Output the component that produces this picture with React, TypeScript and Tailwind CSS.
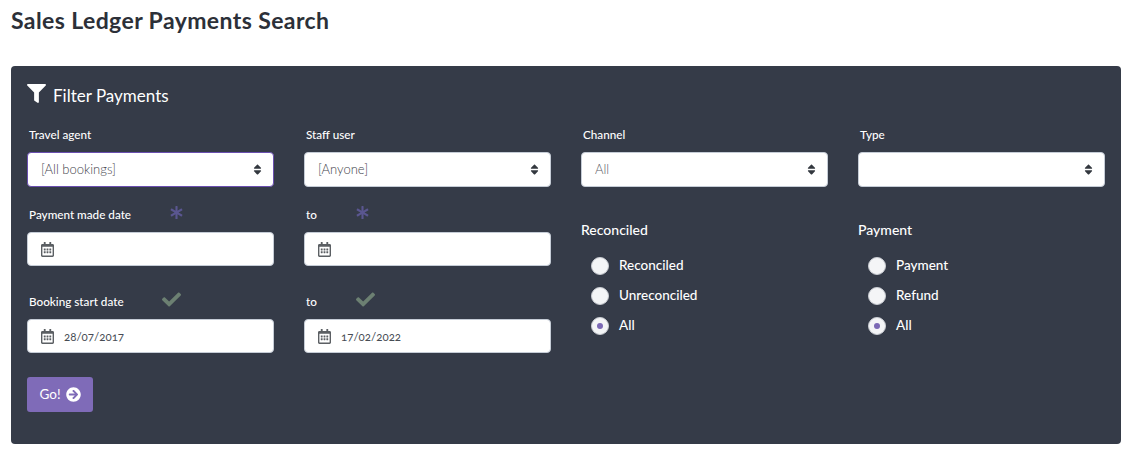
import React from "react";
import { FaFilter, FaSort, FaRegCalendarAlt, FaAsterisk, FaCheck, FaArrowCircleRight } from "react-icons/fa";

const font = "font-['Lato','Open_Sans',sans-serif]";

function Label({ children, mark }: { children: React.ReactNode; mark?: React.ReactNode }) {
  return (
    <div className="h-[17px] pl-[2px] flex items-center relative text-[11.7px] leading-[17px] font-medium text-white mb-[9px]">
      <span>{children}</span>
      {mark}
    </div>
  );
}

function SelectBox({ value, focused, tone }: { value?: string; focused?: boolean; tone?: string }) {
  return (
    <div className={`h-[35px] rounded-[4px] bg-white border flex items-center justify-between pl-[13px] pr-[9px] ${focused ? "border-[#6a4fb0]" : "border-[#c5ccd6]"}`}>
      <span className={`text-[13px] font-light ${tone ?? "text-[#3f444c]"}`}>{value}</span>
      <FaSort className="text-[#33383f] text-[13px]" />
    </div>
  );
}

function DateBox({ value }: { value?: string }) {
  return (
    <div className="h-[34px] rounded-[4px] bg-white border border-[#c5ccd6] flex items-center pl-[13px]">
      <FaRegCalendarAlt className="text-[#5b5f63] w-[13px] h-[15px]" />
      <span className="ml-[10px] text-[11.5px] text-[#474c54] font-normal mt-[1px] [font-variant-numeric:oldstyle-nums]">{value}</span>
    </div>
  );
}

function Radio({ label, checked }: { label: string; checked?: boolean }) {
  return (
    <div className="h-[30px] flex items-center pl-[10px]">
      <span className="w-[18px] h-[18px] rounded-full bg-[#f4f5f7] border border-[#c9ccd2] flex items-center justify-center">
        {checked && <span className="w-[6px] h-[6px] rounded-full bg-[#7c69b5]" />}
      </span>
      <span className="ml-[10px] -mt-[1px] text-[13.5px] font-medium text-white">{label}</span>
    </div>
  );
}

function RadioGroup({ title, options }: { title: string; options: string[] }) {
  return (
    <div>
      <div className="text-[14px] leading-[18px] font-medium text-white mt-[34px] mb-[12px]">{title}</div>
      {options.map((o, i) => (
        <Radio key={o} label={o} checked={i === 2} />
      ))}
    </div>
  );
}

export default function App() {
  const star = <FaAsterisk className="absolute top-0 text-[13px] text-[#5a5690]" style={{ left: 143 }} />;
  const star2 = <FaAsterisk className="absolute top-0 text-[13px] text-[#5a5690]" style={{ left: 52 }} />;
  const tick = <FaCheck className="absolute top-[-3px] text-[19px] text-[#6c8072]" style={{ left: 135 }} />;
  const tick2 = <FaCheck className="absolute top-[-3px] text-[19px] text-[#6c8072]" style={{ left: 52 }} />;
  return (
    <div className={`${font} w-[1130px] h-[460px] bg-white overflow-hidden px-[11px] pr-[9px]`}>
      <h1 className="h-[66px] pt-[7px] text-[23px] leading-[26px] font-bold text-[#2c3038] tracking-[0.4px]">
        Sales Ledger Payments Search
      </h1>
      <div className="h-[378px] rounded-[4px] bg-[#353b48] px-[16px] pt-[17px]">
        <div className="flex items-center h-[24px] mb-[19px]">
          <FaFilter className="text-white text-[19px] w-[19px] h-[19px] -mt-[3px]" />
          <span className="ml-[7px] mt-[1px] text-[17px] text-white">Filter Payments</span>
        </div>
        <div className="grid grid-cols-4 gap-x-[30px]">
          <div>
            <Label>Travel agent</Label>
            <SelectBox value="[All bookings]" focused />
          </div>
          <div>
            <Label>Staff user</Label>
            <SelectBox value="[Anyone]" />
          </div>
          <div>
            <Label>Channel</Label>
            <SelectBox value="All" tone="text-[#5c6068]" />
          </div>
          <div>
            <Label>Type</Label>
            <SelectBox />
          </div>

          <div className="mt-[19px]">
            <Label mark={star}>Payment made date</Label>
            <DateBox />
            <div className="mt-[27px]">
              <Label mark={tick}>Booking start date</Label>
              <DateBox value="28/07/2017" />
            </div>
            <button className="mt-[24px] h-[35px] w-[66px] rounded-[3px] bg-[#7f6bb8] flex items-center justify-center text-[13.5px] text-white font-normal">
              Go!
              <FaArrowCircleRight className="ml-[5px] text-[15px]" />
            </button>
          </div>
          <div className="mt-[19px]">
            <Label mark={star2}>to</Label>
            <DateBox />
            <div className="mt-[27px]">
              <Label mark={tick2}>to</Label>
              <DateBox value="17/02/2022" />
            </div>
          </div>
          <RadioGroup title="Reconciled" options={["Reconciled", "Unreconciled", "All"]} />
          <RadioGroup title="Payment" options={["Payment", "Refund", "All"]} />
        </div>
      </div>
    </div>
  );
}
